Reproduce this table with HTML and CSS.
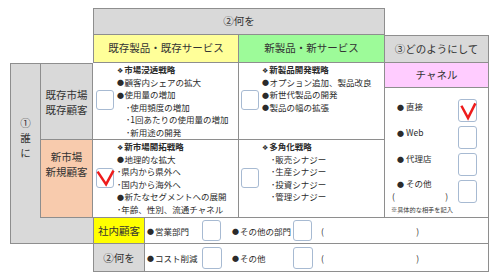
FILE: index.html
```html
<!DOCTYPE html>
<html lang="ja">
<head>
<meta charset="utf-8">
<title>マーケティング戦略シート</title>
<link rel="stylesheet" href="styles.css">
</head>
<body>
<div class="sheet">
  <div class="hd what">②何を</div>
  <div class="hd old">既存製品・既存サービス</div>
  <div class="hd new">新製品・新サービス</div>
  <div class="hd how">③どのようにして</div>

  <div class="who"><span>①</span><span>誰</span><span>に</span></div>
  <div class="lab lab1">既存市場<br>既存顧客</div>
  <div class="lab lab2">新市場<br>新規顧客</div>
  <div class="fill"></div>

  <div class="cell r1 c1">
    <div class="cb"></div>
    <div class="list">
      <div class="h"><span class="dia">❖</span>市場浸透戦略</div>
      <div><span class="dot">●</span>顧客内シェアの拡大</div>
      <div><span class="dot">●</span>使用量の増加</div>
      <div class="sub">･使用頻度の増加</div>
      <div class="sub">･1回あたりの使用量の増加</div>
      <div class="sub">･新用途の開発</div>
    </div>
  </div>

  <div class="cell r1 c2">
    <div class="cb"></div>
    <div class="list">
      <div class="h"><span class="dia">❖</span>新製品開発戦略</div>
      <div><span class="dot">●</span>オプション追加、製品改良</div>
      <div><span class="dot">●</span>新世代製品の開発</div>
      <div><span class="dot">●</span>製品の幅の拡張</div>
    </div>
  </div>

  <div class="cell r2 c1">
    <div class="cb"><svg class="chk" viewBox="0 0 15 17"><path d="M0.5 2.5 L8.5 14.5 L15.5 1.5"/></svg></div>
    <div class="list">
      <div class="h"><span class="dia">❖</span>新市場開拓戦略</div>
      <div><span class="dot">●</span>地理的な拡大</div>
      <div>･県内から県外へ</div>
      <div>･国内から海外へ</div>
      <div><span class="dot">●</span>新たなセグメントへの展開</div>
      <div>･年齢、性別、流通チャネル</div>
    </div>
  </div>

  <div class="cell r2 c2">
    <div class="cb"></div>
    <div class="list">
      <div class="h"><span class="dia">❖</span>多角化戦略</div>
      <div class="sub">･販売シナジー</div>
      <div class="sub">･生産シナジー</div>
      <div class="sub">･投資シナジー</div>
      <div class="sub">･管理シナジー</div>
    </div>
  </div>

  <div class="chan">
    <div class="hd chan-hd">チャネル</div>
    <div class="chan-body">
      <div class="chan-list">
        <div class="ci gap13"><span class="dot">●</span>直接</div>
        <div class="ci gap13"><span class="dot">●</span>Web</div>
        <div class="ci gap12"><span class="dot">●</span>代理店</div>
        <div class="ci"><span class="dot">●</span>その他</div>
        <div class="paren small"><span>(</span><span>)</span></div>
        <div class="note">※具体的な相手を記入</div>
      </div>
      <div class="chan-boxes">
        <div class="cb tall"><svg class="chk" viewBox="0 0 16 20"><path d="M2.2 5.5 L8.5 17.2 L15.5 3.2"/></svg></div>
        <div class="cb tall"></div>
        <div class="cb tall"></div>
        <div class="cb tall"></div>
      </div>
    </div>
  </div>

  <div class="brow b1">
    <div class="blab yellow">社内顧客</div>
    <div class="bt"><span class="dot">●</span>営業部門</div>
    <div class="cb bbox"></div>
    <div class="bt pad"><span class="dot">●</span>その他の部門</div>
    <div class="cb bbox"></div>
    <div class="bp"><div class="paren wide"><span>(</span><span>)</span></div></div>
  </div>

  <div class="brow b2">
    <div class="blab gray">②何を</div>
    <div class="bt"><span class="dot">●</span>コスト削減</div>
    <div class="cb bbox"></div>
    <div class="bt pad"><span class="dot">●</span>その他</div>
    <div class="cb bbox"></div>
    <div class="bp"><div class="paren wide"><span>(</span><span>)</span></div></div>
  </div>
</div>
</body>
</html>
```

FILE: styles.css
```css
* { box-sizing: border-box; }

body {
  margin: 0;
  background: #ffffff;
  color: #2b2b2b;
  font-family: "Noto Sans CJK JP", "DejaVu Sans", sans-serif;
}

.sheet {
  --line: #8e8e8e;
  display: grid;
  grid-template-columns: 30px 53px 146px 146px 104px;
  grid-template-rows: 27px 28px 77px 78px 26px 28px;
  width: 479px;
  margin: 8px 0 0 10px;
}

.hd {
  display: flex;
  align-items: center;
  justify-content: center;
  font-size: 10.5px;
  line-height: 1;
  color: #333333;
  white-space: nowrap;
}

.what {
  grid-column: 3 / 5;
  grid-row: 1;
  background: #d9d9d9;
  border: 1px solid var(--line);
}

.old {
  grid-column: 3;
  grid-row: 2;
  background: #ffff99;
  border-left: 1px solid var(--line);
  border-right: 1px solid var(--line);
  border-bottom: 1px solid var(--line);
}

.new {
  grid-column: 4;
  grid-row: 2;
  background: #9dfb99;
  border-right: 1px solid var(--line);
  border-bottom: 1px solid var(--line);
}

.how {
  grid-column: 5;
  grid-row: 2;
  background: #d9d9d9;
  border-top: 1px solid var(--line);
  border-right: 1px solid var(--line);
  border-bottom: 1px solid var(--line);
}

.who {
  grid-column: 1;
  grid-row: 3 / 6;
  background: #d9d9d9;
  border-top: 1px solid var(--line);
  border-left: 1px solid var(--line);
  border-bottom: 1px solid var(--line);
  display: flex;
  flex-direction: column;
  align-items: center;
  justify-content: center;
  padding-bottom: 32px;
  font-size: 10.5px;
  line-height: 15px;
  color: #333333;
}

.lab {
  grid-column: 2;
  display: flex;
  align-items: center;
  justify-content: center;
  text-align: center;
  font-size: 10.5px;
  line-height: 15px;
  color: #333333;
  border-left: 1px solid var(--line);
  border-right: 1px solid var(--line);
  border-bottom: 1px solid var(--line);
}

.lab1 {
  grid-row: 3;
  background: #d9d9d9;
  border-top: 1px solid var(--line);
}

.lab2 {
  grid-row: 4;
  background: #f8cbad;
  padding-bottom: 30px;
}

.fill {
  grid-column: 2;
  grid-row: 5;
  background: #d9d9d9;
  border-bottom: 1px solid var(--line);
}

.cell {
  display: flex;
  align-items: center;
  border-right: 1px solid var(--line);
  border-bottom: 1px solid var(--line);
  overflow: hidden;
}

.r1 { grid-row: 3; }
.r2 { grid-row: 4; }
.c1 { grid-column: 3; }
.c2 { grid-column: 4; }

.cb {
  flex: none;
  width: 18px;
  height: 20px;
  border: 1.5px solid #a7bad2;
  border-radius: 3px;
  background: #ffffff;
}

.c1 .cb { margin: 0 0 2px 3px; }
.c2 .cb { margin: 0 0 2px 2px; }

.chk {
  display: block;
  width: 100%;
  height: 100%;
  overflow: visible;
}

.chk path {
  fill: none;
  stroke: #ee1c1c;
  stroke-width: 2.4;
  stroke-linejoin: miter;
}

.list {
  align-self: flex-start;
  margin-left: 3px;
  font-size: 8.5px;
  line-height: 12.6px;
  white-space: nowrap;
}

.list > div {
  height: 12.6px;
}

.list .h { font-weight: bold; }

.dia {
  font-family: "DejaVu Sans", sans-serif;
  font-size: 7px;
  font-weight: normal;
  line-height: 0;
  margin-right: 1px;
}

.dot {
  font-size: 7px;
  line-height: 0;
  vertical-align: 0.5px;
  margin-right: 0.5px;
}

.sub { padding-left: 9px; }

.chan {
  grid-column: 5;
  grid-row: 3 / 5;
  display: flex;
  flex-direction: column;
  border-right: 1px solid var(--line);
  border-bottom: 1px solid var(--line);
}

.chan-hd {
  flex: none;
  height: 25px;
  background: #ffccff;
  border-bottom: 1px solid var(--line);
}

.chan-body {
  flex: 1;
  display: flex;
  padding-left: 6px;
}

.chan-list {
  width: 67px;
  padding-top: 12px;
  font-size: 8.5px;
  line-height: 13px;
  white-space: nowrap;
}

.chan-list > div { height: 13px; }

.ci { padding-left: 6px; }
.ci .dot { margin-right: 2px; }
.gap13 { margin-bottom: 13px; }
.gap12 { margin-bottom: 12px; }

.paren {
  display: flex;
  justify-content: space-between;
}

.paren.small { width: 57px; padding-left: 1px; }

.note {
  font-size: 6.2px;
  color: #3a3a3a;
}

.chan-boxes {
  display: flex;
  flex-direction: column;
  gap: 4px;
  padding-top: 11px;
}

.cb.tall { width: 19px; height: 23px; }

.brow {
  grid-column: 3 / 6;
  display: grid;
  grid-template-columns: 51px 57px 19px 72px 20px 1fr;
  align-items: center;
  border-left: 1px solid var(--line);
  border-right: 1px solid var(--line);
  border-bottom: 1px solid var(--line);
  font-size: 8.5px;
  white-space: nowrap;
}

.b1 { grid-row: 5; }
.b2 { grid-row: 6; }

.blab {
  align-self: stretch;
  display: flex;
  align-items: center;
  justify-content: center;
  font-size: 10.5px;
  color: #333333;
  border-right: 1px solid var(--line);
}

.yellow { background: #ffff00; }
.gray { background: #d9d9d9; }

.bt { padding-left: 2px; }
.bt.pad { padding-left: 11px; }
.bt .dot { margin-right: 1px; }

.cb.bbox { width: 19px; height: 21px; }
.b2 .cb.bbox { width: 20px; height: 22px; }

.bp { padding-left: 8px; }

.paren.wide { width: 98px; }
```
